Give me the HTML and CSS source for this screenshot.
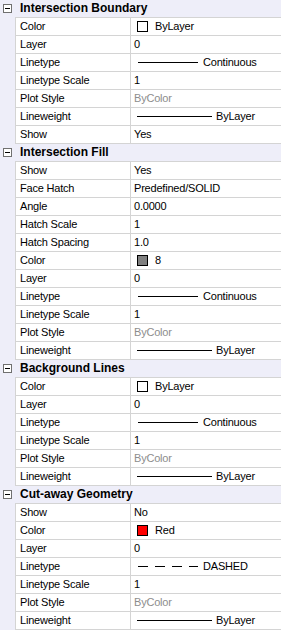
FILE: index.html
```html
<!DOCTYPE html>
<html lang="en">
<head>
    <meta charset="UTF-8">
    <title>Section Settings</title>
    <link rel="stylesheet" href="styles.css">
</head>
<body>
<div class="props">
    <!-- Intersection Boundary -->
    <div class="cat"><div class="gutter"><span class="toggle"></span></div><div class="cat-title">Intersection Boundary</div></div>
    <div class="row"><div class="name">Color</div><div class="value"><span class="swatch"></span>ByLayer</div></div>
    <div class="row"><div class="name">Layer</div><div class="value">0</div></div>
    <div class="row"><div class="name">Linetype</div><div class="value"><span class="lt"></span>Continuous</div></div>
    <div class="row"><div class="name">Linetype Scale</div><div class="value">1</div></div>
    <div class="row"><div class="name">Plot Style</div><div class="value dim">ByColor</div></div>
    <div class="row"><div class="name">Lineweight</div><div class="value"><span class="lw"></span>ByLayer</div></div>
    <div class="row"><div class="name">Show</div><div class="value">Yes</div></div>

    <!-- Intersection Fill -->
    <div class="cat"><div class="gutter"><span class="toggle"></span></div><div class="cat-title">Intersection Fill</div></div>
    <div class="row"><div class="name">Show</div><div class="value">Yes</div></div>
    <div class="row"><div class="name">Face Hatch</div><div class="value">Predefined/SOLID</div></div>
    <div class="row"><div class="name">Angle</div><div class="value">0.0000</div></div>
    <div class="row"><div class="name">Hatch Scale</div><div class="value">1</div></div>
    <div class="row"><div class="name">Hatch Spacing</div><div class="value">1.0</div></div>
    <div class="row"><div class="name">Color</div><div class="value"><span class="swatch gray"></span>8</div></div>
    <div class="row"><div class="name">Layer</div><div class="value">0</div></div>
    <div class="row"><div class="name">Linetype</div><div class="value"><span class="lt"></span>Continuous</div></div>
    <div class="row"><div class="name">Linetype Scale</div><div class="value">1</div></div>
    <div class="row"><div class="name">Plot Style</div><div class="value dim">ByColor</div></div>
    <div class="row"><div class="name">Lineweight</div><div class="value"><span class="lw"></span>ByLayer</div></div>

    <!-- Background Lines -->
    <div class="cat"><div class="gutter"><span class="toggle"></span></div><div class="cat-title">Background Lines</div></div>
    <div class="row"><div class="name">Color</div><div class="value"><span class="swatch"></span>ByLayer</div></div>
    <div class="row"><div class="name">Layer</div><div class="value">0</div></div>
    <div class="row"><div class="name">Linetype</div><div class="value"><span class="lt"></span>Continuous</div></div>
    <div class="row"><div class="name">Linetype Scale</div><div class="value">1</div></div>
    <div class="row"><div class="name">Plot Style</div><div class="value dim">ByColor</div></div>
    <div class="row"><div class="name">Lineweight</div><div class="value"><span class="lw"></span>ByLayer</div></div>

    <!-- Cut-away Geometry -->
    <div class="cat"><div class="gutter"><span class="toggle"></span></div><div class="cat-title">Cut-away Geometry</div></div>
    <div class="row"><div class="name">Show</div><div class="value">No</div></div>
    <div class="row"><div class="name">Color</div><div class="value"><span class="swatch red"></span>Red</div></div>
    <div class="row"><div class="name">Layer</div><div class="value">0</div></div>
    <div class="row"><div class="name">Linetype</div><div class="value"><span class="lt dashed"></span>DASHED</div></div>
    <div class="row"><div class="name">Linetype Scale</div><div class="value">1</div></div>
    <div class="row"><div class="name">Plot Style</div><div class="value dim">ByColor</div></div>
    <div class="row"><div class="name">Lineweight</div><div class="value"><span class="lw"></span>ByLayer</div></div>
</div>
</body>
</html>
```

FILE: styles.css
```css
body {
    margin: 0;
    background: #fff;
    font-family: "Liberation Sans", Arial, sans-serif;
    font-size: 11px;
    color: #000;
}

.props {
    width: 281px;
    background-color: #eeeef9;
}

/* category header */
.cat {
    display: flex;
    height: 18px;
}

.gutter {
    width: 15px;
    display: flex;
    align-items: center;
    padding-left: 3px;
    box-sizing: border-box;
}

.toggle {
    position: relative;
    width: 9px;
    height: 9px;
    box-sizing: border-box;
    border: 1px solid #707070;
    background: #fff;
    margin-top: -1px;
}

.toggle::after {
    content: "";
    position: absolute;
    left: 1px;
    top: 3px;
    width: 5px;
    height: 1px;
    background: #000;
}

.cat-title {
    flex: 1;
    padding-left: 5px;
    font-size: 12px;
    font-weight: bold;
    line-height: 17px;
    border-bottom: 1px solid #d4d4d4;
}

/* property rows */
.row {
    display: flex;
    height: 18px;
    padding-left: 15px;
}

.name,
.value {
    box-sizing: border-box;
    height: 18px;
    line-height: 17px;
    border-left: 1px solid #d4d4d4;
    border-bottom: 1px solid #d4d4d4;
    background: #fff;
    white-space: nowrap;
    letter-spacing: -0.2px;
}

.name {
    width: 115px;
    padding-left: 4px;
}

.value {
    flex: 1;
    padding-left: 3px;
    display: flex;
    align-items: center;
}

.value.dim {
    color: #8d8d8d;
}

.swatch {
    width: 11px;
    height: 11px;
    box-sizing: border-box;
    border: 1px solid #000;
    background: #fff;
    margin-left: 3px;
    margin-right: 7px;
}

.swatch.gray {
    background: #808080;
}

.swatch.red {
    background: #ff0000;
}

.lt {
    width: 60px;
    height: 1px;
    background: #000;
    margin-left: 4px;
    margin-right: 5px;
}

.lt.dashed {
    background: repeating-linear-gradient(to right, #000 0 10px, transparent 10px 17px);
}

.lw {
    width: 75px;
    height: 1px;
    background: #000;
    margin-left: 3px;
    margin-right: 4px;
}
```
